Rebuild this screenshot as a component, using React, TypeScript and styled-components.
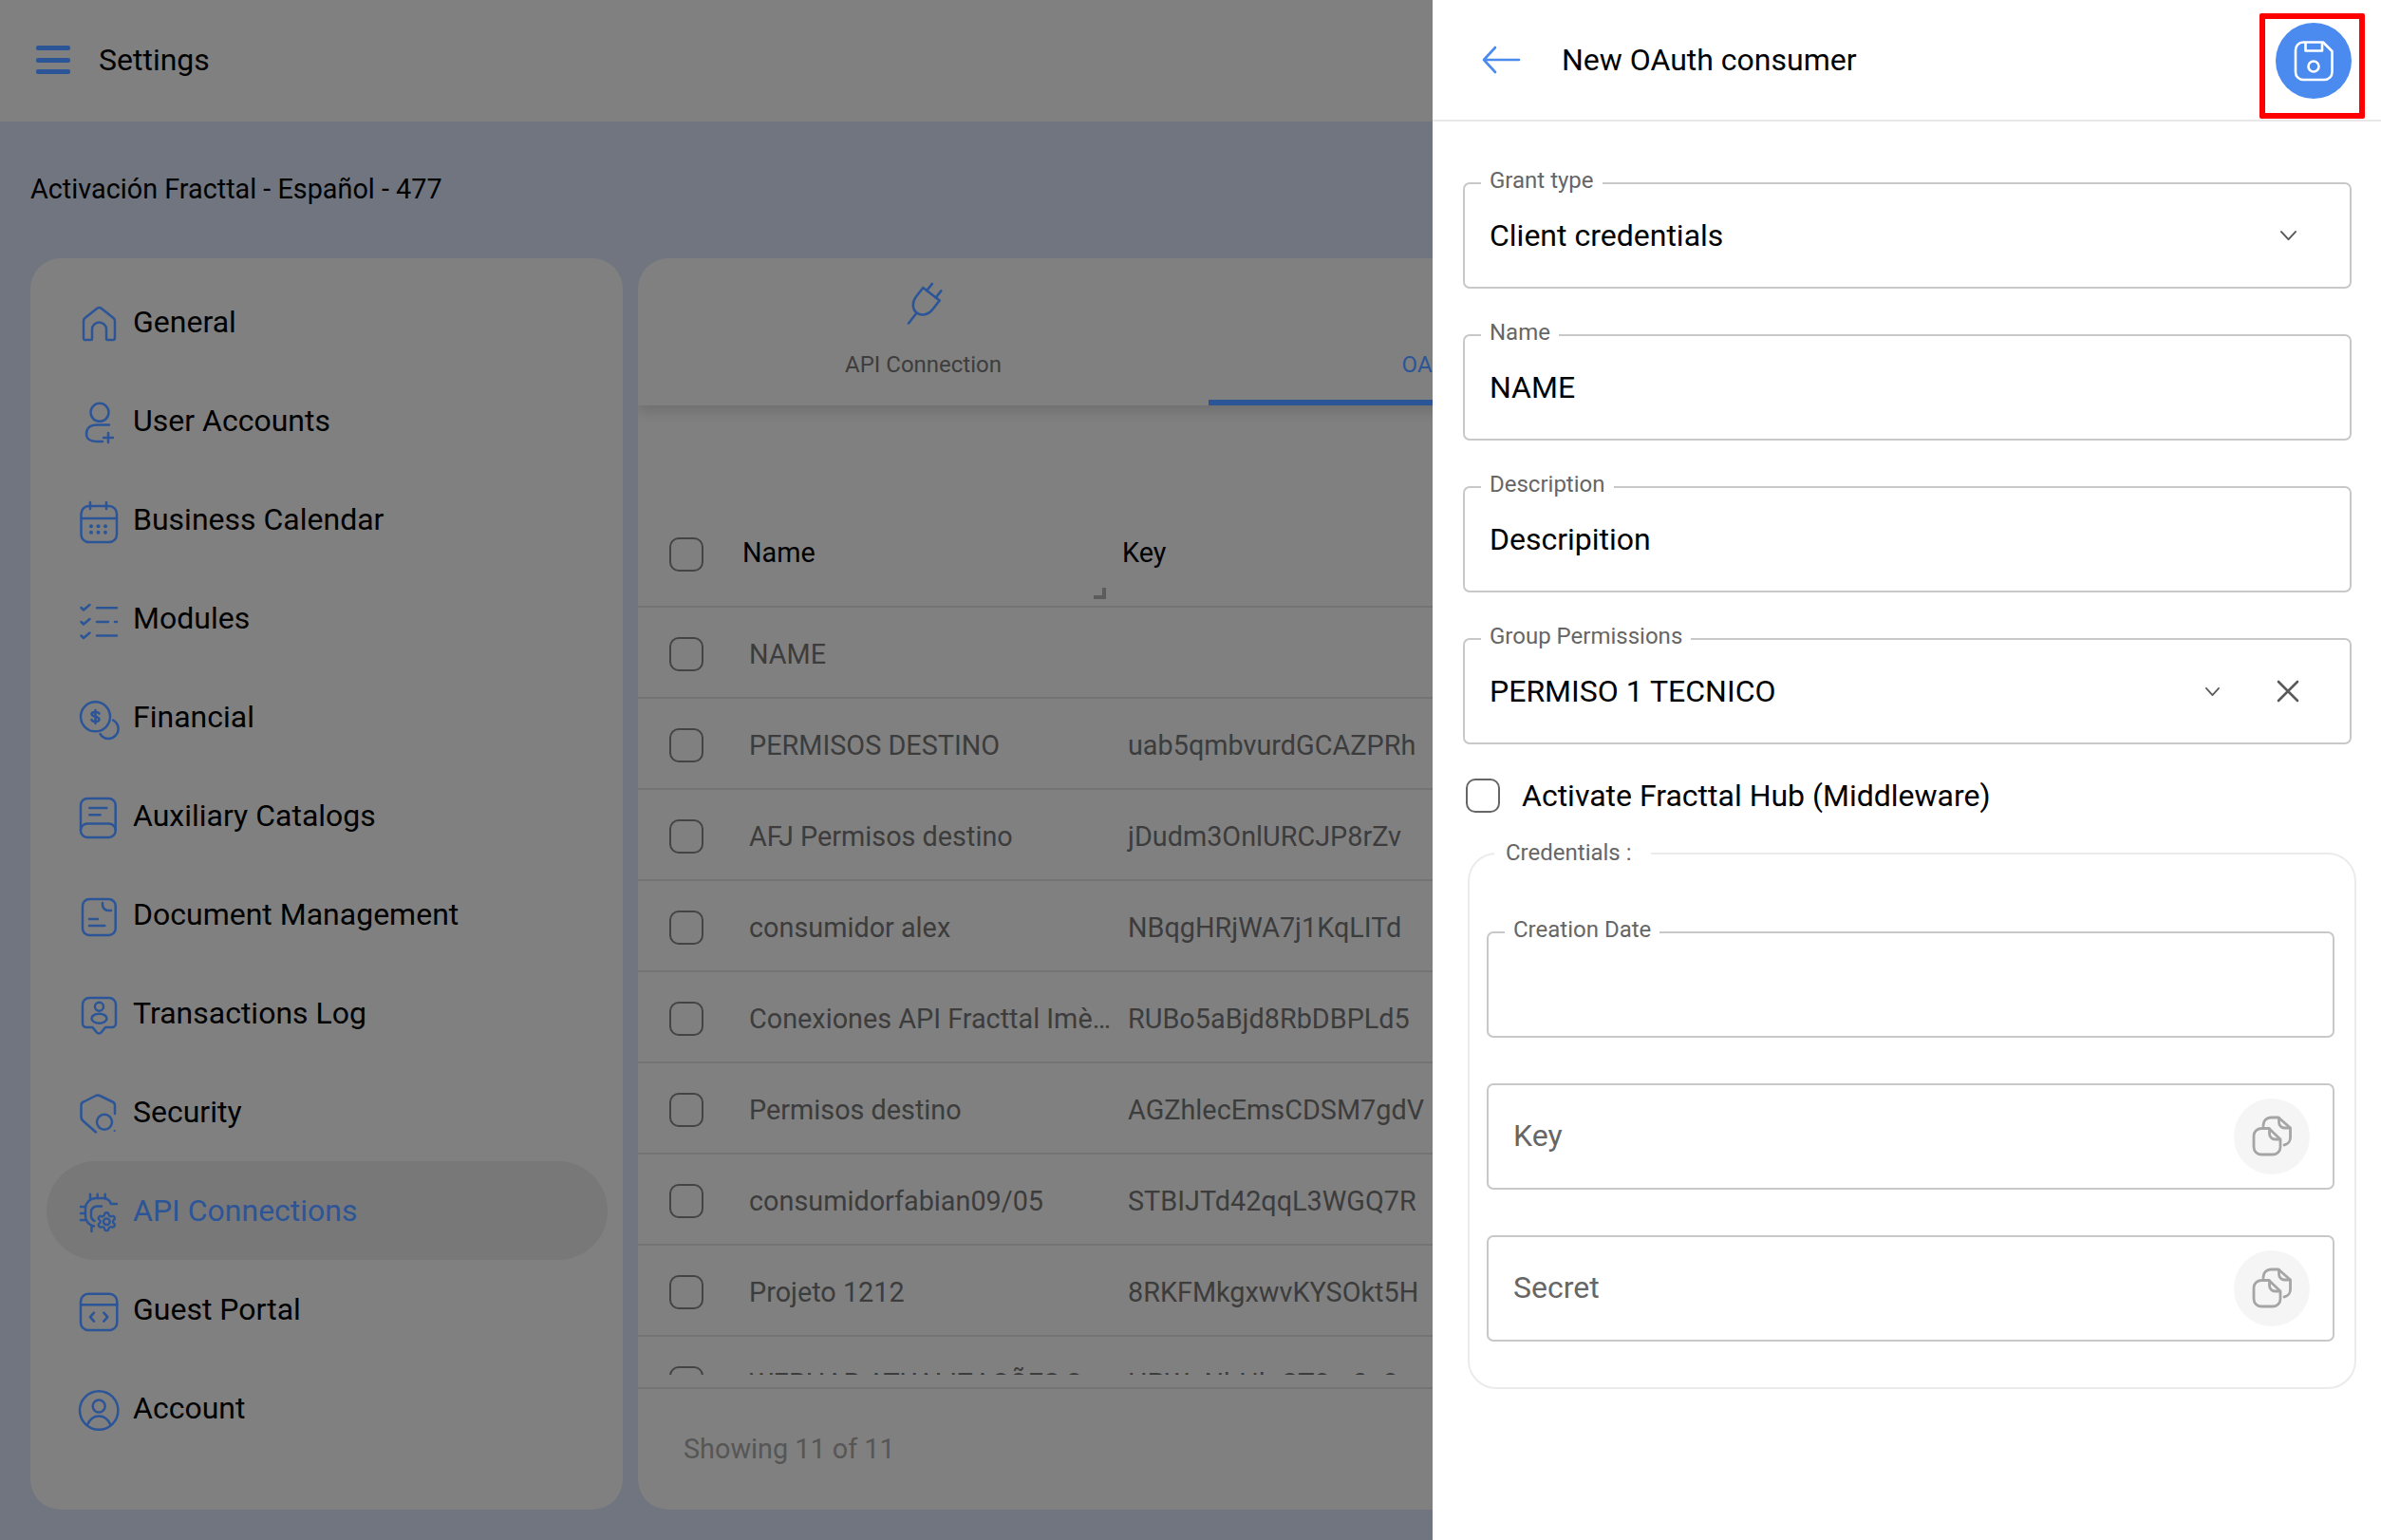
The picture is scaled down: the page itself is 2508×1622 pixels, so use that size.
import React from 'react';
import styled, { createGlobalStyle } from 'styled-components';

const GlobalStyle = createGlobalStyle`
  * {
    box-sizing: border-box;
  }
  html,
  body {
    margin: 0;
    padding: 0;
    height: 100%;
    overflow: hidden;
    font-family: Roboto, 'Liberation Sans', sans-serif;
    color: #000;
  }
`;

const dimBlue = '#2c5598';
const blue = '#4b8bf0';

const Page = styled.div`
  width: 2508px;
  height: 1622px;
  display: flex;
  flex-direction: column;
  background: #70757f;
  overflow: hidden;
`;

const TopBar = styled.header`
  height: 128px;
  flex: none;
  display: flex;
  align-items: center;
  gap: 30px;
  padding-left: 38px;
  padding-bottom: 2px;
  background: #808080;
  font-size: 32px;
`;

const Hamburger = styled.div`
  width: 36px;
  height: 30px;
  display: flex;
  flex-direction: column;
  justify-content: space-between;

  span {
    display: block;
    height: 5px;
    border-radius: 2px;
    background: ${dimBlue};
  }
`;

const CompanyLine = styled.div`
  height: 144px;
  flex: none;
  display: flex;
  align-items: center;
  padding: 0 32px 3px;
  font-size: 28.8px;
`;

const Panels = styled.div`
  flex: 1;
  display: grid;
  grid-template-columns: 624px 1fr;
  gap: 16px;
  padding: 0 32px 32px;
  min-height: 0;
`;

const SideCard = styled.nav`
  background: #808080;
  border-radius: 32px;
  padding-top: 15px;
  display: flex;
  flex-direction: column;
`;

const NavItem = styled.div<{ $active?: boolean }>`
  height: 104px;
  flex: none;
  margin: 0 16px 0 17px;
  padding-left: 33px;
  display: flex;
  align-items: center;
  gap: 14px;
  border-radius: 52px;
  font-size: 32px;
  background: ${(p) => (p.$active ? '#787878' : 'transparent')};
  color: ${(p) => (p.$active ? dimBlue : '#000')};

  svg {
    color: ${dimBlue};
    flex: none;
    margin-top: 2px;
  }
`;

const ContentCard = styled.section`
  background: #808080;
  border-radius: 32px;
  overflow: hidden;
  display: flex;
  flex-direction: column;
  min-width: 0;
`;

const Tabs = styled.div`
  height: 155px;
  flex: none;
  display: flex;
  box-shadow: 0 6px 14px rgba(0, 0, 0, 0.14);
`;

const Tab = styled.div<{ $active?: boolean }>`
  width: 601px;
  display: flex;
  flex-direction: column;
  align-items: center;
  padding-top: 28px;
  gap: 29px;
  font-size: 24px;
  line-height: 30px;
  color: ${(p) => (p.$active ? dimBlue : '#3d3d3d')};
  border-bottom: 6px solid ${(p) => (p.$active ? dimBlue : 'transparent')};

  svg {
    color: ${dimBlue};
  }
`;

const HeadRow = styled.div`
  height: 114px;
  margin-top: 99px;
  flex: none;
  display: grid;
  grid-template-columns: 110px 400px 1fr;
  align-items: center;
  font-size: 28.8px;
  border-bottom: 2px solid #737373;
  position: relative;
`;

const ResizeMark = styled.span`
  position: absolute;
  left: 480px;
  bottom: 7px;
  width: 13px;
  height: 12px;
  border-right: 4px solid #5c5c5c;
  border-bottom: 4px solid #5c5c5c;
`;

const Rows = styled.div`
  height: 808px;
  flex: none;
  overflow: hidden;
`;

const Row = styled.div`
  height: 96px;
  padding-top: 3px;
  display: grid;
  grid-template-columns: 110px 400px 1fr;
  align-items: center;
  font-size: 28.8px;
  color: #3c3c3c;
  border-bottom: 2px solid #737373;
`;

const CheckCell = styled.div<{ $shift?: number }>`
  padding-left: 33px;
  padding-top: ${(p) => p.$shift ?? 0}px;
  display: flex;
`;

const Check = styled.span<{ $color: string }>`
  display: block;
  width: 36px;
  height: 36px;
  border: 2.4px solid ${(p) => p.$color};
  border-radius: 10px;
`;

const NameCell = styled.div`
  padding: 0 10px 0 7px;
  white-space: nowrap;
  overflow: hidden;
  text-overflow: ellipsis;
`;

const KeyCell = styled.div`
  padding-left: 6px;
  white-space: nowrap;
`;

const TableFooter = styled.div`
  margin-top: 13px;
  flex: 1;
  display: flex;
  align-items: center;
  padding: 0 0 2px 48px;
  border-top: 2px solid #737373;
  font-size: 28.8px;
  color: #565656;
`;

const Drawer = styled.aside`
  position: fixed;
  top: 0;
  right: 0;
  bottom: 0;
  width: 999px;
  background: #fff;
  display: flex;
  flex-direction: column;
`;

const DrawerHeader = styled.div`
  height: 128px;
  flex: none;
  display: flex;
  align-items: center;
  padding-left: 53px;
  gap: 45px;
  border-bottom: 2px solid #e8e8e8;
  font-size: 32px;
  position: relative;
`;

const SaveButton = styled.div`
  position: absolute;
  top: 24px;
  right: 31px;
  width: 80px;
  height: 80px;
  border-radius: 50%;
  background: ${blue};
  color: #fff;
  display: flex;
  align-items: center;
  justify-content: center;
`;

const RedMark = styled.div`
  position: absolute;
  top: 14px;
  right: 17px;
  width: 111px;
  height: 111px;
  border: 6px solid #fe0000;
  border-radius: 2px;
`;

const Form = styled.div`
  padding: 64px 31px 0 32px;
  display: flex;
  flex-direction: column;
`;

const FieldStack = styled.div`
  display: flex;
  flex-direction: column;
  gap: 48px;
`;

const Field = styled.div`
  position: relative;
  height: 112px;
  display: flex;
  align-items: center;
  padding: 0 16px 0 26px;
  border: 2px solid #c8c8c8;
  border-radius: 7px;
  font-size: 32px;
`;

const FieldLabel = styled.label`
  position: absolute;
  top: -18px;
  left: 17px;
  padding: 0 9px;
  background: #fff;
  font-size: 24px;
  line-height: 28px;
  color: #666;
`;

const FieldValue = styled.span`
  flex: 1;
`;

const Placeholder = styled.span`
  flex: 1;
  margin-top: -3px;
  color: #666;
`;

const FieldIcons = styled.div`
  display: flex;
  align-items: center;
  gap: 56px;
  padding-right: 37px;
  color: #5a5a5a;
`;

const IconSlot = styled.span`
  width: 24px;
  display: flex;
  justify-content: center;
`;

const CheckRow = styled.div`
  margin-top: 36px;
  padding-left: 3px;
  display: flex;
  align-items: center;
  gap: 23px;
  font-size: 32px;
  line-height: 34px;
`;

const CredentialsBox = styled.div`
  position: relative;
  margin: 42px -5px 0 5px;
  padding: 81px 21px 48px 18px;
  border: 2px solid #ebebeb;
  border-radius: 30px;
`;

const BoxLabel = styled.span`
  position: absolute;
  top: -16px;
  left: 26px;
  padding: 0 20px 0 12px;
  background: #fff;
  font-size: 24px;
  line-height: 28px;
  color: #666;
`;

const CopyButton = styled.div`
  width: 80px;
  height: 80px;
  flex: none;
  margin-right: 8px;
  border-radius: 50%;
  background: #f5f5f5;
  color: #a5a5a5;
  display: flex;
  align-items: center;
  justify-content: center;
`;

const Ico = styled.svg`
  display: block;
  overflow: visible;
  fill: none;
  stroke: currentColor;
  stroke-linecap: round;
  stroke-linejoin: round;
`;

const Icon: React.FC<{ children: React.ReactNode }> = ({ children }) => (
  <Ico width="44" height="44" viewBox="-2 -2 44 44" strokeWidth="2.5">
    {children}
  </Ico>
);

const gearPath =
  'M9.671 4.136a2.34 2.34 0 0 1 4.659 0 2.34 2.34 0 0 0 3.319 1.915 2.34 2.34 0 0 1 2.33 4.033 2.34 2.34 0 0 0 0 3.831 2.34 2.34 0 0 1-2.33 4.033 2.34 2.34 0 0 0-3.319 1.915 2.34 2.34 0 0 1-4.659 0 2.34 2.34 0 0 0-3.32-1.915 2.34 2.34 0 0 1-2.33-4.033 2.34 2.34 0 0 0 0-3.831A2.34 2.34 0 0 1 6.35 6.051a2.34 2.34 0 0 0 3.319-1.915';

const HomeIcon = () => (
  <Icon>
    <path d="M5 38H12a1 1 0 0 0 1-1V27a7.5 7.5 0 0 1 15 0V37a1 1 0 0 0 1 1H35a2 2 0 0 0 2-2V18a4 4 0 0 0-1.4-3L23 5a4 4 0 0 0-5 0L5.4 15A4 4 0 0 0 4 18V36a2 2 0 0 0 1 2z" />
  </Icon>
);

const UserAddIcon = () => (
  <Icon>
    <circle cx="21" cy="10.3" r="9.5" />
    <path d="M31 23.5H18C11 23.5 7 27 7 33C7 38 11 41 17 41H24" />
    <path d="M30 32V42M25 37H35" />
  </Icon>
);

const CalendarIcon = () => (
  <Icon>
    <rect x="1.5" y="5" width="37.5" height="38" rx="8" />
    <path d="M11 1V8M28 1V8M1.5 18H39" />
    <g fill="currentColor" stroke="none">
      <circle cx="12" cy="26.3" r="2" />
      <circle cx="19.5" cy="26.3" r="2" />
      <circle cx="27" cy="26.3" r="2" />
      <circle cx="12" cy="32.8" r="2" />
      <circle cx="19.5" cy="32.8" r="2" />
      <circle cx="27" cy="32.8" r="2" />
    </g>
  </Icon>
);

const ChecklistIcon = () => (
  <Icon>
    <path d="M1.5 8L4 10.5L10.5 5M1.5 23L4 25.5L10.5 20M1.5 37.5L4 40L10.5 34.5" />
    <path d="M18 8.3H39M18 23H30M37 23H39M18 37.5H39" />
  </Icon>
);

const CoinsIcon = () => (
  <Icon>
    <circle cx="16.5" cy="18.8" r="15.5" />
    <path d="M20.5 15.5C20 13.5 12.5 13 12.5 16C12.5 19.5 20.5 18 20.5 21.7C20.5 24.5 13 24.5 12.5 22M16.5 12V26" />
    <path d="M35 22.5A10.3 10.3 0 1 1 21.5 37" />
  </Icon>
);

const CatalogIcon = () => (
  <Icon>
    <rect x="1" y="1" width="36.7" height="41" rx="7" />
    <path d="M1 34A7 7 0 0 1 8 27.5H30.7A7 7 0 0 1 37.7 34" />
    <path d="M10.3 11H28.3M10.3 18.3H21.6" />
  </Icon>
);

const DocumentIcon = () => (
  <Icon>
    <rect x="3" y="3" width="34.7" height="38" rx="7" />
    <path d="M24 7V9A6 6 0 0 0 30 15H33M10 24H19M10 31H26.3" />
  </Icon>
);

const LogIcon = () => (
  <Icon>
    <path d="M10 3H31A7 7 0 0 1 38 10V30A4 4 0 0 1 34 34H27L22.5 39.5A3 3 0 0 1 18 39.5L13.5 34H7A4 4 0 0 1 3 30V10A7 7 0 0 1 10 3Z" />
    <circle cx="20.5" cy="12.3" r="4.5" />
    <ellipse cx="20.5" cy="24.7" rx="8" ry="5" />
  </Icon>
);

const ShieldIcon = () => (
  <Icon>
    <path d="M37 21V12A4 4 0 0 0 34.5 8.5L21 2A5 5 0 0 0 17 2L4 8.5A4 4 0 0 0 1.5 12V24A6 6 0 0 0 4 29L17 40.5" />
    <circle cx="26" cy="29.7" r="8" />
    <circle cx="36.7" cy="39" r="1.1" fill="currentColor" stroke="none" />
  </Icon>
);

const ChipGearIcon = () => (
  <Icon>
    <path d="M33 12A9 9 0 0 0 25 6H17A11 11 0 0 0 6 17V25A11 11 0 0 0 15 35.5" />
    <path d="M23 14.5H18A6 6 0 0 0 12 20.5V25A6 6 0 0 0 15.5 30" />
    <path d="M11 1.7V6M18.7 1.7V6M26.7 1.7V6M34.5 12H39M1 15H5.5M1 22H5.5M1 29H5.5M12.5 35V41" />
    <g transform="translate(16.9 19.3) scale(0.95)">
      <path d={gearPath} />
      <circle cx="12" cy="12" r="3.5" />
    </g>
  </Icon>
);

const PortalIcon = () => (
  <Icon>
    <rect x="1" y="2.7" width="38.3" height="38.3" rx="8" />
    <path d="M1 14.3H39.3M15 22.7L11 27.2L15 31.7M25.3 22.7L29.3 27.2L25.3 31.7" />
  </Icon>
);

const AccountIcon = () => (
  <Icon>
    <circle cx="20.2" cy="21.5" r="20.2" />
    <circle cx="20.2" cy="17" r="6.5" />
    <path d="M8 36.5C11 30 15 27.5 20.2 27.5S29.4 30 32.4 36.5" />
  </Icon>
);

const PlugIcon = () => (
  <Ico width="40" height="40" viewBox="0 0 40 40" strokeWidth="2.6">
    <g transform="rotate(38 20 20)">
      <path d="M20 32V46M14 7V-2M26 7V-2" />
      <path d="M9 7H31V19A11 13 0 0 1 9 19Z" />
    </g>
  </Ico>
);

const BackArrow = () => (
  <Ico width="38" height="28" viewBox="0 0 38 28" strokeWidth="2.6" style={{ color: blue }}>
    <path d="M1 14H38M13 1L1 14L13 27" />
  </Ico>
);

const SaveIcon = () => (
  <Ico width="42" height="42" viewBox="0 0 42 42" strokeWidth="2.6">
    <path d="M10 1.5H31L40.5 11V33A8 8 0 0 1 32.5 41H10A8 8 0 0 1 2 33V10A8 8 0 0 1 10 1.5Z" />
    <path d="M12.5 2V10.5H30V2" />
    <circle cx="21" cy="27" r="5.5" />
  </Ico>
);

const ChevronIcon: React.FC<{ size: number }> = ({ size }) => (
  <Ico width={size} height={size * 0.6} viewBox="0 0 17 10" strokeWidth="2">
    <path d="M1 1L8.5 9L16 1" />
  </Ico>
);

const CloseIcon = () => (
  <Ico width="24" height="24" viewBox="0 0 24 24" strokeWidth="2.6">
    <path d="M2 2L22 22M22 2L2 22" />
  </Ico>
);

const CopyIcon = () => (
  <Ico width="42" height="42" viewBox="0 0 42 42" strokeWidth="2.8">
    <path d="M18 12.5H10A8 8 0 0 0 2 20.5V32A8 8 0 0 0 10 40H22A8 8 0 0 0 30 32V24Z" />
    <path d="M18.5 13V18A6 6 0 0 0 24.5 24H29.5" />
    <path d="M12 10V9A8 8 0 0 1 20 1H28L40.5 12V22A8 8 0 0 1 34 30" />
    <path d="M28.5 1.5V6A6 6 0 0 0 34.5 12H40" />
  </Ico>
);

const navItems = [
  { label: 'General', icon: <HomeIcon /> },
  { label: 'User Accounts', icon: <UserAddIcon /> },
  { label: 'Business Calendar', icon: <CalendarIcon /> },
  { label: 'Modules', icon: <ChecklistIcon /> },
  { label: 'Financial', icon: <CoinsIcon /> },
  { label: 'Auxiliary Catalogs', icon: <CatalogIcon /> },
  { label: 'Document Management', icon: <DocumentIcon /> },
  { label: 'Transactions Log', icon: <LogIcon /> },
  { label: 'Security', icon: <ShieldIcon /> },
  { label: 'API Connections', icon: <ChipGearIcon />, active: true },
  { label: 'Guest Portal', icon: <PortalIcon /> },
  { label: 'Account', icon: <AccountIcon /> },
];

const consumers = [
  ['NAME', ''],
  ['PERMISOS DESTINO', 'uab5qmbvurdGCAZPRh'],
  ['AFJ Permisos destino', 'jDudm3OnlURCJP8rZv'],
  ['consumidor alex', 'NBqgHRjWA7j1KqLITd'],
  ['Conexiones API Fracttal Imèxico Destino', 'RUBo5aBjd8RbDBPLd5'],
  ['Permisos destino', 'AGZhlecEmsCDSM7gdV'],
  ['consumidorfabian09/05', 'STBIJTd42qqL3WGQ7R'],
  ['Projeto 1212', '8RKFMkgxwvKYSOkt5H'],
  ['WEBHAB ATUALIZAÇÕES 2', 'HPWpNbHlpCT8rz0a8a'],
];

const App: React.FC = () => {
  return (
    <Page>
      <GlobalStyle />
      <TopBar>
        <Hamburger>
          <span />
          <span />
          <span />
        </Hamburger>
        Settings
      </TopBar>
      <CompanyLine>Activación Fracttal - Español - 477</CompanyLine>
      <Panels>
        <SideCard>
          {navItems.map((item) => (
            <NavItem key={item.label} $active={item.active}>
              {item.icon}
              {item.label}
            </NavItem>
          ))}
        </SideCard>
        <ContentCard>
          <Tabs>
            <Tab>
              <PlugIcon />
              API Connection
            </Tab>
            <Tab $active>
              <PlugIcon />
              OAuth Connection
            </Tab>
          </Tabs>
          <HeadRow>
            <CheckCell $shift={4}>
              <Check $color="#444" />
            </CheckCell>
            <div>Name</div>
            <div>Key</div>
            <ResizeMark />
          </HeadRow>
          <Rows>
            {consumers.map(([name, key]) => (
              <Row key={name}>
                <CheckCell>
                  <Check $color="#444" />
                </CheckCell>
                <NameCell>{name}</NameCell>
                <KeyCell>{key}</KeyCell>
              </Row>
            ))}
          </Rows>
          <TableFooter>Showing 11 of 11</TableFooter>
        </ContentCard>
      </Panels>

      <Drawer>
        <DrawerHeader>
          <BackArrow />
          New OAuth consumer
          <SaveButton>
            <SaveIcon />
          </SaveButton>
          <RedMark />
        </DrawerHeader>
        <Form>
          <FieldStack>
            <Field>
              <FieldLabel>Grant type</FieldLabel>
              <FieldValue>Client credentials</FieldValue>
              <FieldIcons>
                <IconSlot>
                  <ChevronIcon size={17} />
                </IconSlot>
              </FieldIcons>
            </Field>
            <Field>
              <FieldLabel>Name</FieldLabel>
              <FieldValue>NAME</FieldValue>
            </Field>
            <Field>
              <FieldLabel>Description</FieldLabel>
              <FieldValue>Descripition</FieldValue>
            </Field>
            <Field>
              <FieldLabel>Group Permissions</FieldLabel>
              <FieldValue>PERMISO 1 TECNICO</FieldValue>
              <FieldIcons>
                <IconSlot>
                  <ChevronIcon size={15} />
                </IconSlot>
                <IconSlot>
                  <CloseIcon />
                </IconSlot>
              </FieldIcons>
            </Field>
          </FieldStack>
          <CheckRow>
            <Check $color="#666" />
            Activate Fracttal Hub (Middleware)
          </CheckRow>
          <CredentialsBox>
            <BoxLabel>Credentials :</BoxLabel>
            <FieldStack>
              <Field>
                <FieldLabel>Creation Date</FieldLabel>
              </Field>
              <Field>
                <Placeholder>Key</Placeholder>
                <CopyButton>
                  <CopyIcon />
                </CopyButton>
              </Field>
              <Field>
                <Placeholder>Secret</Placeholder>
                <CopyButton>
                  <CopyIcon />
                </CopyButton>
              </Field>
            </FieldStack>
          </CredentialsBox>
        </Form>
      </Drawer>
    </Page>
  );
};

export default App;
